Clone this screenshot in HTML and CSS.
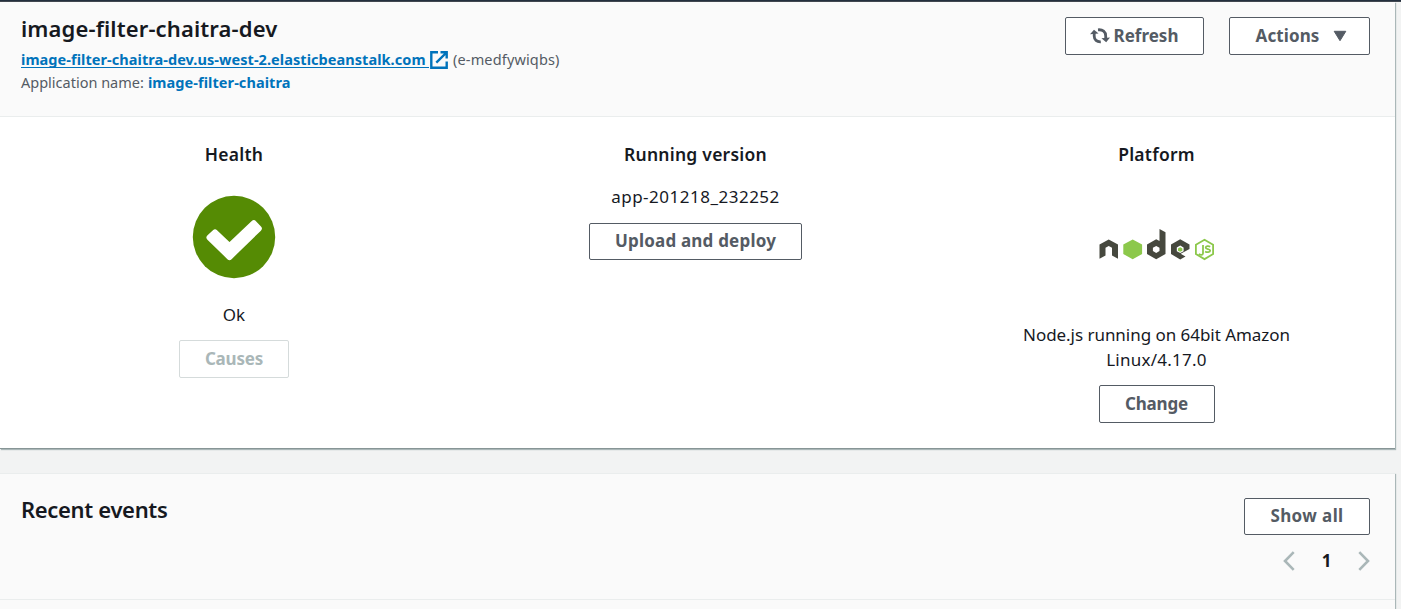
FILE: index.html
```html
<!DOCTYPE html>
<html lang="en">
<head>
<meta charset="utf-8">
<title>image-filter-chaitra-dev</title>
<link rel="stylesheet" href="styles.css">
</head>
<body>
<div class="topbar"></div>
<main>
  <section class="card overview">
    <header class="card-header">
      <div class="env">
        <h1><span class="t-title">image-filter-chaitra-dev</span></h1>
        <div class="env-line">
          <a class="env-url" href="#"><span class="t-url">image-filter-chaitra-dev.us-west-2.elasticbeanstalk.com</span></a>
          <svg class="ext" viewBox="0 0 18 18" width="18" height="18" fill="none" stroke="#0073bb" stroke-width="2.4"><path d="M8 1.3H1.3v15.4h15.4V10.5M10.5 1.3h6.2v6.2M16.5 1.5 6.3 11.7"/></svg>
          <span class="t-id">(e-medfywiqbs)</span>
        </div>
        <div class="env-line"><span class="t-app">Application name:</span><a class="t-appname" href="#">image-filter-chaitra</a></div>
      </div>
      <div class="actions">
        <button class="btn refresh">
          <svg viewBox="0 0 20 18" width="20" height="18"><g fill="none" stroke="#545b64" stroke-width="2.8"><path d="M4.200 6V9c0 3.800 2.600 6 6.600 5.800"/><path d="M8 2.800c4.800-.4 7.700 1.800 7.700 6.200v3"/></g><path fill="#545b64" d="M0 7.200 4 2.800 8.600 6.500zM11.400 11.200 20 10.400 16.200 15.200z"/></svg>
          <span class="t-refresh">Refresh</span>
        </button>
        <button class="btn menu"><span class="t-actions">Actions</span>
          <svg viewBox="0 0 14 12" width="14" height="12"><path fill="#545b64" stroke="#545b64" stroke-linejoin="round" d="M1.200 1.300h11.600L7 10.700z"/></svg>
        </button>
      </div>
    </header>
    <div class="columns">
      <div class="col health">
        <h2 class="t-health">Health</h2>
        <svg class="ok-icon" viewBox="0 0 84 84" width="84" height="84"><circle cx="42" cy="42" r="41.200" fill="#558b04"/><path fill="#fff" stroke="#fff" stroke-width="6" stroke-linejoin="round" d="M17.500 42.500 23 37.500l14.500 13.600L61.800 28.200 66.800 33.500 37.500 62z"/></svg>
        <p class="status t-ok">Ok</p>
        <button class="btn causes" disabled><span class="t-causes">Causes</span></button>
      </div>
      <div class="col">
        <h2 class="t-running">Running version</h2>
        <p class="version t-version">app-201218_232252</p>
        <button class="btn upload"><span class="t-upload">Upload and deploy</span></button>
      </div>
      <div class="col">
        <h2 class="t-platform">Platform</h2>
        <svg class="node" viewBox="0 0 116 34" width="116" height="34">
          <g fill="#46483e">
            <path d="M.5 15.500 9.700 10.400l9.300 5.100v14.300l-6-3.400v-7.600l-3.300-1.700-3.200 1.700v7.600l-6 3.400z"/>
            <path fill-rule="evenodd" d="M60.500 0l6 3.300V25l-9.300 5.200L48 25V15.500l9.200-5.200 3.300 1.800zM57.200 17l-3.300 1.800v3.300l3.300 1.800 3.300-1.800v-3.300z"/>
            <path fill-rule="evenodd" d="M81.200 10.300 90.500 15.500v4.500l-6 3.300-2.800 1.500 4.800 2.800-5.300 2.900L72 25V15.500zM81.200 16.600l-3.400 2v3.600l3.400 1.900 3.400-1.900v-3.600z"/>
          </g>
          <path fill="#8cc84b" d="m33.700 10.400 9.400 5.200v9.500l-9.400 5.200-9.400-5.200v-9.500zM81.200 18.300l2.200 1.200v2.200l-2.200 1.100-2.200-1.100v-2.200z"/>
          <g fill="none" stroke="#8cc84b" stroke-width="1.800"><path d="m105.500 10.800 8.600 5v9.300l-8.600 5-8.600-5v-9.300z"/><path d="M104 16v8.500c0 1.700-2.700 1.700-4.200.6M111.200 17.700c-1.500-.8-4.500-.8-4.500 1s4.500.9 4.500 2.900-3.400 1.900-5.100.8"/></g>
        </svg>
        <p class="platform"><span class="t-node">Node.js running on 64bit Amazon</span><br><span class="t-linux">Linux/4.17.0</span></p>
        <button class="btn change"><span class="t-change">Change</span></button>
      </div>
    </div>
  </section>
  <section class="card events">
    <header class="events-header">
      <h2 class="events-title"><span class="t-events">Recent events</span></h2>
      <div class="events-tools">
        <button class="btn showall"><span class="t-show">Show all</span></button>
        <nav class="pager">
          <svg viewBox="0 0 12 20" width="12" height="20" fill="none" stroke="#aab7b8" stroke-width="2.600"><path d="M10.700 1.200 2 10l8.700 8.800"/></svg>
          <span>1</span>
          <svg viewBox="0 0 12 20" width="12" height="20" fill="none" stroke="#aab7b8" stroke-width="2.600"><path d="M1.300 1.200 10 10l-8.700 8.800"/></svg>
        </nav>
      </div>
    </header>
  </section>
</main>
</body>
</html>
```
FILE: styles.css
```css
* { box-sizing: border-box; }
body { margin: 0; height: 609px; overflow: hidden; background: #f2f3f3; color: #16191f; font-family: "Noto Sans", "Open Sans", sans-serif; font-size: 17px; }
h1, h2, p { margin: 0; white-space: nowrap; }
svg { display: block; flex: none; }
a { color: #0073bb; text-decoration: none; font-weight: 700; }
.topbar { height: 2px; background: #232f3e; border-bottom: 1px solid #414750; }
.card { width: 1395px; box-shadow: 1px 1px 1px #aab7b8; }
.overview { height: 447px; background: #fff; border-bottom: 1px solid #879596; }
.card-header { height: 115px; padding: 12px 25px 0 21px; display: flex; justify-content: space-between; background: #fafafa; border-bottom: 1px solid #eaeded; }
h1 { font-size: 22px; line-height: 28px; font-weight: 600; letter-spacing: .13px; }
.env-line { display: flex; align-items: center; height: 23px; margin-top: 6px; font-size: 14.500px; line-height: 23px; color: #545b64; white-space: nowrap; }
.env-line + .env-line { margin-top: 0; }
.env-url { width: 408px; line-height: 16px; border-bottom: 1px solid #0073bb; }
.t-url { letter-spacing: .06px; }
.t-appname { letter-spacing: .08px; }
.ext { margin: 0 5px 0 1px; }
.t-id { letter-spacing: .15px; }
.t-app { margin-right: 4px; }
.actions { display: flex; gap: 25px; padding-top: 3px; }
.btn { height: 38px; padding: 0; display: flex; align-items: center; justify-content: center; border: 1px solid #545b64; border-radius: 2px; background: #fff; color: #545b64; font: 700 17px/24px "Noto Sans", "Open Sans", sans-serif; white-space: nowrap; }
.refresh { width: 139px; gap: 4px; padding-right: 1px; }
.menu { width: 141px; gap: 14px; padding-left: 4px; }
.t-actions { letter-spacing: .1px; }
.columns { display: grid; grid-template-columns: repeat(3, 461px); padding: 24px 0 0 4px; }
.col { display: flex; flex-direction: column; align-items: center; }
.health { padding-right: 1px; }
.col h2 { font-size: 17.500px; line-height: 26px; font-weight: 600; letter-spacing: .24px; }
.ok-icon { margin-top: 28px; }
.status { margin-top: 23px; line-height: 25px; }
.causes { width: 110px; margin-top: 13px; border-color: #d5dbdb; color: #aab7b8; }
.t-causes { letter-spacing: -.2px; }
.version { margin-top: 17px; line-height: 25px; letter-spacing: .5px; }
.upload { width: 213px; height: 37px; margin-top: 14px; padding-bottom: 2px; }
.t-upload { letter-spacing: .2px; }
.node { margin-top: 62px; }
.platform { margin-top: 59px; line-height: 25px; text-align: center; }
.t-node { letter-spacing: -.04px; }
.t-linux { letter-spacing: .25px; }
.change { width: 116px; margin-top: 13px; }
.t-change { letter-spacing: -.15px; }
.events { height: 136px; margin-top: 24px; background: #fafafa; border-top: 1px solid #eaeded; }
.events-header { height: 126px; padding: 24px 25px 0 21px; display: flex; justify-content: space-between; border-bottom: 1px solid #eaeded; }
.events-title { margin-top: -2px; font-size: 22px; line-height: 26px; font-weight: 600; letter-spacing: -.33px; }
.showall { width: 126px; height: 37px; padding-bottom: 2px; }
.t-show { letter-spacing: .4px; }
.pager { margin: 16px 0 0 39px; display: flex; justify-content: space-between; align-items: center; height: 20px; font-size: 17px; line-height: 20px; font-weight: 700; }
```
